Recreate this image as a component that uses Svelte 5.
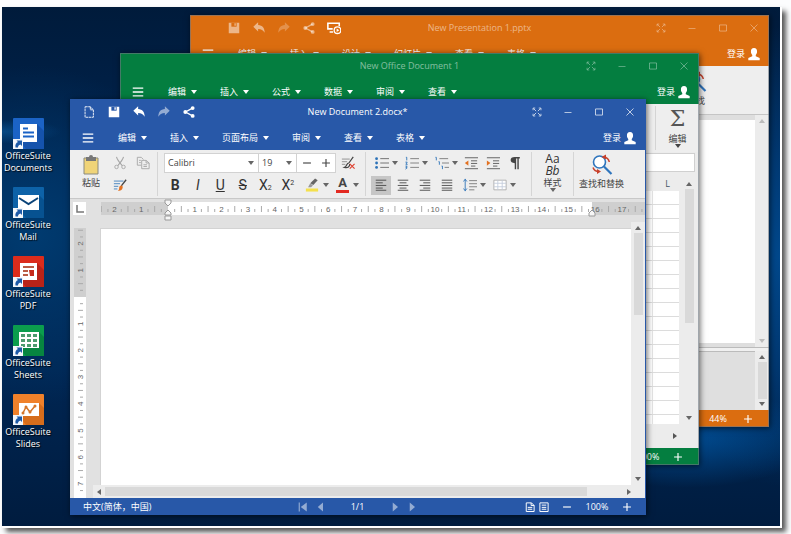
<script>
  const shortcuts = [
    { icon: 'documents', name: 'Documents' },
    { icon: 'mail', name: 'Mail' },
    { icon: 'pdf', name: 'PDF' },
    { icon: 'sheets', name: 'Sheets' },
    { icon: 'slides', name: 'Slides' }
  ];

  const docMenus = ['编辑', '插入', '页面布局', '审阅', '查看', '表格'];
  const sheetMenus = ['编辑', '插入', '公式', '数据', '审阅', '查看'];
  const slideMenus = ['编辑', '插入', '设计', '幻灯片', '查看', '表格'];

  const docTools = ['new', 'save', 'undo', 'redo', 'share'];
  const slideTools = ['', 'save', 'undo', 'redo', 'share', 'play'];

  const CM = 26.7;
  const hZero = 67;
  const vZero = 69;

  function ticks(zero, length) {
    const list = [];
    for (let i = Math.ceil((-zero / CM) * 4); zero + (i * CM) / 4 < length; i++) {
      list.push({ pos: zero + (i * CM) / 4, whole: i % 4 === 0, half: i % 2 === 0, n: Math.abs(i / 4) });
    }
    return list;
  }

  const hTicks = ticks(hZero, 544);
  const vTicks = ticks(vZero, 269);
  const rows = Array.from({ length: 17 }, (_, i) => i);

  let font = $state('Calibri');
  let size = $state('19');
  let align = $state('left');
</script>

{#snippet glyph(name)}
  <svg class="glyph" viewBox="0 0 16 16" width="14" height="14" aria-hidden="true" fill="none" stroke="currentColor">
    {#if name === 'new'}
      <path d="M3.500 2h6l3.500 3.500v8.500h-9.500z M9.500 2v3.500h3.500" stroke-dasharray="3 .6" />
    {:else if name === 'save'}
      <path d="M2 2h12v12H2z" fill="currentColor" stroke="none" />
      <path d="M5 2h6v4.500H5z" class="hole" stroke="none" />
      <path d="M8.500 2.500h1.500v3H8.500z" fill="currentColor" stroke="none" />
    {:else if name === 'undo'}
      <path d="M1.500 6.500 7 1.500v3c5 .3 7.500 3.500 7.500 9-1.500-3-4-4.500-7.500-4.500v3z" fill="currentColor" stroke="none" />
    {:else if name === 'redo'}
      <path d="M14.500 6.500 9 1.500v3c-5 .3-7.500 3.500-7.500 9 1.500-3 4-4.500 7.500-4.500v3z" fill="currentColor" stroke="none" />
    {:else if name === 'share'}
      <path d="M12 3.500 4 8l8 4.500" stroke-width="1.500" />
      <g fill="currentColor" stroke="none"><circle cx="12.200" cy="3.500" r="2.200" /><circle cx="3.800" cy="8" r="2.200" /><circle cx="12.200" cy="12.500" r="2.200" /></g>
    {:else if name === 'play'}
      <path d="M6.500 9H1V2.500h13V6M3 12.500h4" stroke-width="1.800" />
      <circle cx="12" cy="10.500" r="3.800" stroke-width="1.500" />
      <path d="m11 8.500 3 2-3 2z" fill="currentColor" stroke="none" />
    {:else if name === 'full'}
      <path d="M3.500 6V3.500H6M10 3.500h2.500V6M12.500 10v2.500H10M6 12.500H3.500V10M4 4l3 3m2 2 3 3M12 4 9 7m-2 2-3 3" />
    {:else if name === 'min'}
      <path d="M4 8.500h8" />
    {:else if name === 'max'}
      <path d="M4 4.500h8v7H4z" />
    {:else if name === 'close'}
      <path d="m4 4 8 8m0-8-8 8" />
    {:else if name === 'menu'}
      <path d="M2 3.500h12M2 8h12M2 12.500h12" stroke-width="1.500" />
    {:else if name === 'user'}
      <path d="M8 1c2.500 0 3.500 1.700 3.500 4 0 2-.7 3-1.500 4v1.500l4.500 2V15h-13v-2.500l4.500-2V9c-.8-1-1.500-2-1.500-4C4.500 2.700 5.500 1 8 1z" fill="currentColor" stroke="none" />
    {:else if name === 'cut'}
      <path d="M4 1c.5 3 3.500 6.500 6.500 10M12 1c-.5 3-3.500 6.500-6.500 10" stroke-width="1.200" />
      <circle cx="4" cy="12.500" r="2" /><circle cx="12" cy="12.500" r="2" />
    {:else if name === 'copy'}
      <path d="M6 10.500H1.500v-9H6L8.500 4M3.500 5h2M3.500 7.500h2" />
      <path d="M6.500 5h5L15 8v6.500H6.500zM11.500 5v3H15M8.500 10h4M8.500 12h4" />
    {:else if name === 'brush'}
      <path d="M1 3.500h11M1 6.500h7M1 9.500h5M1 12.500h4" stroke="#3d7ebd" />
      <path d="m15 2-5.500 7" stroke="#444" stroke-width="1.500" />
      <path d="M9.500 8.500c2 .5 2 2 1 4s-3 2-5 2c1.500-1 1.500-1.500 1.500-3s1-3 2.500-3z" fill="#e37222" stroke="none" />
    {:else if name === 'clear'}
      <path d="M1 3.500h9M1 6.500h6M1 9.500h4" stroke="#888" />
      <path d="m14 1-5 7c-3 0-2 4-5 5 4 1 6-1 6-4" stroke="#444" stroke-width="1.400" />
      <path d="m10 9 5.500 5.500m0-5.500L10 14.500" stroke="#df3d2c" stroke-width="1.300" />
    {:else if name === 'marker'}
      <path d="M6 6 11.500.5l3 2L9.500 8z" fill="#666" stroke="none" />
      <path d="m6 6 3 2.500-2 2H3.500z" fill="#999" stroke="none" />
      <path d="M1 12h14v3.500H1z" fill="#f4e04d" stroke="none" />
    {:else if name === 'bullets'}
      <path d="M6 3h10M6 8h10M6 13h10" stroke="#666" />
      <g fill="#2c72b8" stroke="none"><circle cx="1.800" cy="3" r="1.600" /><circle cx="1.800" cy="8" r="1.600" /><circle cx="1.800" cy="13" r="1.600" /></g>
    {:else if name === 'numbers'}
      <path d="M6 3h10M6 8h10M6 13h10" stroke="#777" />
      <path d="M1 1.500h1V5M.5 7h2L1 9.500h2M.5 11.500h2L1 13l1.500.5-2 1.500" stroke="#2c72b8" />
    {:else if name === 'levels'}
      <path d="M5 3h10M8 8h8M11 13h5" stroke="#777" />
      <path d="M.5 1.500h1V5M4 6.500h1V10M7.500 11.500h1V15" stroke="#2c72b8" />
    {:else if name === 'outdent'}
      <path d="M1 2h15M8 5.500h7M8 8.500h7M8 11.500h5M1 14.500h15" stroke="#555" />
      <path d="M5 5v6L1 8z" fill="#e37222" stroke="none" />
    {:else if name === 'indent'}
      <path d="M1 2h15M8 5.500h7M8 8.500h7M8 11.500h5M1 14.500h15" stroke="#555" />
      <path d="M1 5v6l4-3z" fill="#e37222" stroke="none" />
    {:else if name === 'pilcrow'}
      <path d="M13.500 2H7.500M8.500 2v13M11.500 2v13" stroke-width="1.600" />
      <path d="M8 1.200v7C4.500 8.200 3 6.800 3 4.700s1.500-3.500 5-3.500z" fill="currentColor" stroke="none" />
    {:else if name === 'left'}
      <path d="M2 2.500h12M2 5.500h8M2 8.500h12M2 11.500h8M2 14h12" />
    {:else if name === 'center'}
      <path d="M2 2.500h12M4 5.500h8M2 8.500h12M4 11.500h8M2 14h12" />
    {:else if name === 'right'}
      <path d="M2 2.500h12M6 5.500h8M2 8.500h12M6 11.500h8M2 14h12" />
    {:else if name === 'justify'}
      <path d="M2 2.500h12M2 5.500h12M2 8.500h12M2 11.500h12M2 14h12" />
    {:else if name === 'spacing'}
      <path d="M7 3h9M7 6.500h9M7 10h9M7 13.500h6" stroke="#777" />
      <path d="M2.500 1v14M.5 4l2-2.500 2 2.500M.5 12l2 2.500 2-2.500" stroke="#2c72b8" />
    {:else if name === 'table'}
      <path d="M1 2.500h14v11H1z" fill="#fff" stroke="#aaa" />
      <path d="M1 6h14M1 10h14M5.500 2.500v11M10.500 2.500v11" stroke="#c3cddb" />
    {:else if name === 'first'}
      <path d="M3 2v12" stroke-width="1.500" /><path d="M13 2v12L5 8z" fill="currentColor" stroke="none" />
    {:else if name === 'prev'}
      <path d="M12 2v12L5 8z" fill="currentColor" stroke="none" />
    {:else if name === 'next'}
      <path d="M5 2v12l7-6z" fill="currentColor" stroke="none" />
    {:else if name === 'page'}
      <path d="M3 2.500h7l3.500 3.500v8H3zM9.500 2.500V6h4M5 8.500h6M5 11h6" stroke-width="1.300" />
    {:else if name === 'reflow'}
      <path d="M2.500 2.500h11v11.500h-11zM5 5.500h6M5 8.500h6M5 11h6" stroke-width="1.300" />
    {:else if name === 'minus'}
      <path d="M3.500 8h9" stroke-width="1.300" />
    {:else if name === 'plus'}
      <path d="M3.500 8h9M8 3.500v9" stroke-width="1.300" />
    {/if}
  </svg>
{/snippet}

{#snippet find()}
  <svg width="22" height="22" viewBox="0 0 22 22" fill="none" aria-hidden="true">
    <circle cx="8.500" cy="8" r="6" fill="#fff" stroke="#2f75bd" stroke-width="1.600" />
    <path d="m13 12.500 7.500 7.500" stroke="#2f75bd" stroke-width="2.200" />
    <path d="M12.500 3c3 .3 5.300 2 5.800 5M8 17.500c-3 0-5-1.200-6-4" stroke="#c8402a" stroke-width="1.500" />
    <path d="M10.500 3 15 .5v5zM10 17.500 6 15v5z" fill="#c8402a" />
  </svg>
{/snippet}

{#snippet caret()}<span class="caret"></span>{/snippet}

{#snippet chrome(title, tools, menus)}
  <header class="chrome">
    <div class="titlebar">
      <div class="tools">
        {#each tools as tool}
          {#if tool}<button aria-label={tool} class:dim={tool === 'redo'} class:lit={tool === 'play'}>{@render glyph(tool)}</button>{:else}<span class="slot"></span>{/if}
        {/each}
      </div>
      <h1>{title}</h1>
      <div class="controls">
        {#each ['full', 'min', 'max', 'close'] as control}
          <button aria-label={control}>{@render glyph(control)}</button>
        {/each}
      </div>
    </div>
    <nav class="menubar">
      <button class="burger" aria-label="menu">{@render glyph('menu')}</button>
      {#each menus as menu}
        <button class="menu">{menu}{@render caret()}</button>
      {/each}
      <a class="login" href="#login"><span>登录</span>{@render glyph('user')}</a>
    </nav>
  </header>
{/snippet}

{#snippet scrollbar(kind)}
  <div class="scroll {kind}">
    <span class="arrow back"></span>
    <span class="track"><span class="thumb"></span></span>
    <span class="arrow forward"></span>
  </div>
{/snippet}

{#snippet split(name)}
  <button class="split" aria-label={name}><span class="face">{@render glyph(name)}</span>{@render caret()}</button>
{/snippet}

<main class="screen">
  <div class="desktop">
    <div class="shortcuts">
      {#each shortcuts as { icon, name }}
        <button class="shortcut">
          <svg width="31" height="31" viewBox="0 0 31 31" aria-hidden="true">
            {#if icon === 'documents'}
              <rect width="31" height="31" rx="1" fill="#1b63c6" />
              <path d="M24 6 31 13v18H13l-6-7z" fill="#1553ad" />
              <path d="M7 6h17v18H7z" fill="#fff" />
              <path d="M10 10.500h5M10 14.500h11M10 18.500h11" stroke="#1b63c6" stroke-width="2" />
            {:else if icon === 'mail'}
              <rect width="31" height="31" rx="1" fill="#0d62a8" />
              <path d="m26 8 5 5v18H13l-8-8z" fill="#075291" />
              <path d="M5 8h21v15H5z" fill="#fff" />
              <path d="m6 11 9.500 6L25 11" fill="none" stroke="#0a4378" stroke-width="2" />
            {:else if icon === 'pdf'}
              <rect width="31" height="31" rx="1" fill="#dc2c1c" />
              <path d="m24 7 7 7v17H13l-6-7z" fill="#b92318" />
              <path d="M7 7h17v17H7z" fill="#fff" />
              <path d="M10 11h11M10 15h5M10 19h5" stroke="#b95c45" stroke-width="2" />
              <path d="M16 14h5v6h-4z" fill="#c52a1b" />
            {:else if icon === 'sheets'}
              <rect width="31" height="31" rx="1" fill="#0b9d4d" />
              <path d="m26 7 5 5v19H13l-7-8z" fill="#078540" />
              <path d="M6 7h20v16H6z" fill="#fff" />
              <path d="M8 9h4v3H8zm6 0h4v3h-4zm6 0h4v3h-4zM8 14h4v3H8zm6 0h4v3h-4zm6 0h4v3h-4zM8 19h4v3H8zm6 0h4v3h-4zm6 0h4v3h-4z" fill="#4c9b6e" />
            {:else}
              <rect width="31" height="31" rx="1" fill="#f0812a" />
              <path d="m26 9 5 5v17H13l-7-9z" fill="#d66d1c" />
              <path d="M6 9h20v13H6z" fill="#fff" />
              <path d="m10 19 3-6 4 5 5-6" fill="none" stroke="#d5762b" stroke-width="1.500" />
              <g fill="#d5762b"><circle cx="10" cy="19" r="1.500" /><circle cx="13" cy="13" r="1.500" /><circle cx="17" cy="18" r="1.500" /><circle cx="22" cy="12" r="1.500" /></g>
            {/if}
            <path d="M0 21h10v10H0z" fill="#f4f7fb" />
            <path d="M2.500 29.500c-.5-3 .5-4.500 2.500-5.500L3.500 22.500H9V28l-1.500-1.500c-2 .5-2.500 1.500-2.500 3z" fill="#1d5aa8" />
          </svg>
          <span>OfficeSuite<br />{name}</span>
        </button>
      {/each}
    </div>

    <section class="window slides">
      {@render chrome('New Presentation 1.pptx', slideTools, slideMenus)}
      <div class="ribbon back-ribbon"><button class="big">{@render find()}<span>查找</span></button></div>
      <div class="stage"><div class="canvas"></div>{@render scrollbar('v faint')}</div>
      <div class="notes"><div></div>{@render scrollbar('v')}</div>
      <footer class="status"><span class="zoom">44%</span><button class="zoom-btn" aria-label="zoom in">{@render glyph('plus')}</button></footer>
    </section>

    <section class="window sheet">
      {@render chrome('New Office Document 1', [], sheetMenus)}
      <div class="ribbon back-ribbon">
        <button class="big sum"><span class="sigma">Σ</span><span>编辑</span>{@render caret()}</button>
      </div>
      <div class="formula"><input aria-label="formula" /></div>
      <div class="grid">
        <div class="cells">
          <div class="col-head">L</div>
          {#each rows as row (row)}<div class="cell"></div>{/each}
        </div>
        {@render scrollbar('v cells-scroll')}
      </div>
      <div class="tabs"><span class="arrow"></span></div>
      <footer class="status"><span class="zoom">100%</span><button class="zoom-btn" aria-label="zoom in">{@render glyph('plus')}</button></footer>
    </section>

    <section class="window doc">
      {@render chrome('New Document 2.docx*', docTools, docMenus)}
      <div class="ribbon">
        <div class="group clip">
          <button class="big">
            <svg width="16" height="20" viewBox="0 0 16 20" aria-hidden="true">
              <path d="M1 3h14v16H1z" fill="#f0d478" stroke="#8a8a80" />
              <path d="M3 2h3a2 2 0 0 1 4 0h3v4H3z" fill="#777" />
            </svg>
            <span>粘贴</span>
          </button>
          <div class="clip-tools">
            <button class="off" aria-label="cut">{@render glyph('cut')}</button>
            <button class="off" aria-label="copy">{@render glyph('copy')}</button>
            <button aria-label="format painter">{@render glyph('brush')}</button>
          </div>
        </div>
        <div class="group fonts">
          <div class="row">
            <label class="pick family"><select bind:value={font} aria-label="font"><option>Calibri</option></select>{@render caret()}</label>
            <label class="pick points"><select bind:value={size} aria-label="size"><option>19</option></select>{@render caret()}</label>
            <div class="steps">
              <button aria-label="smaller">{@render glyph('minus')}</button>
              <button aria-label="larger">{@render glyph('plus')}</button>
            </div>
            <button class="wipe" aria-label="clear formatting">{@render glyph('clear')}</button>
          </div>
          <div class="row">
            <div class="styles">
              <button><b>B</b></button>
              <button><i>I</i></button>
              <button><u>U</u></button>
              <button><s>S</s></button>
              <button><span>X<small>2</small></span></button>
              <button><span>X<small class="up">2</small></span></button>
            </div>
            {@render split('marker')}
            <button class="split"><span class="face ink">A</span>{@render caret()}</button>
          </div>
        </div>
        <div class="group paras">
          <div class="row">
            {@render split('bullets')}
            {@render split('numbers')}
            {@render split('levels')}
            <button class="face" aria-label="outdent">{@render glyph('outdent')}</button>
            <button class="face" aria-label="indent">{@render glyph('indent')}</button>
            <button class="face" aria-label="marks">{@render glyph('pilcrow')}</button>
          </div>
          <div class="row">
            {#each ['left', 'center', 'right', 'justify'] as side}
              <button class="face" class:active={align === side} aria-label={side} onclick={() => (align = side)}>{@render glyph(side)}</button>
            {/each}
            {@render split('spacing')}
            {@render split('table')}
          </div>
        </div>
        <div class="group style-group">
          <button class="big"><span class="sample"><span>Aa</span><i>Bb</i></span><span>样式</span>{@render caret()}</button>
        </div>
        <div class="group search-group">
          <button class="big search">{@render find()}<span>查找和替换</span></button>
        </div>
      </div>

      <div class="ruler-row">
        <button class="tab-stop" aria-label="tab stop"><svg width="8" height="8" aria-hidden="true"><path d="M1 0v7h7" fill="none" stroke="#777" stroke-width="1.500" /></svg></button>
        <svg class="h-ruler" height="24" aria-hidden="true">
          <rect y="3" width="100%" height="13" fill="#cfcfcf" />
          <rect x={hZero} y="3" width="424" height="13" fill="#fff" />
          {#each hTicks as t}
            {#if t.whole && t.n}
              <text x={t.pos} y="13" text-anchor="middle">{t.n}</text>
            {:else if !t.whole}
              <line x1={t.pos} x2={t.pos} y1={t.half ? 7 : 10} y2="13" />
            {/if}
          {/each}
          <g class="stops">
            <path d="M64 1h6v3l-3 3-3-3zM67 11l3 3v2h-6v-2zM64 17h6v4h-6z" />
            <path d="m491 11 3 3v3h-6v-3z" />
          </g>
        </svg>
      </div>
      <div class="doc-body">
        <svg class="v-ruler" width="12" aria-hidden="true">
          <rect width="12" height="100%" fill="#fff" />
          <rect width="12" height={vZero} fill="#cfcfcf" />
          {#each vTicks as t}
            {#if t.whole && t.n}
              <text transform="translate(9 {t.pos}) rotate(-90)" text-anchor="middle">{t.n}</text>
            {:else if !t.whole}
              <line y1={t.pos} y2={t.pos} x1={t.half ? 4 : 6} x2="9" />
            {/if}
          {/each}
        </svg>
        <div class="paper"></div>
        {@render scrollbar('v page-scroll')}
        {@render scrollbar('h')}
      </div>

      <footer class="status">
        <span class="lang">中文(简体，中国)</span>
        <div class="pager">
          <button class="dim" aria-label="first">{@render glyph('first')}</button>
          <button class="dim" aria-label="previous">{@render glyph('prev')}</button>
          <span>1/1</span>
          <button class="dim" aria-label="next">{@render glyph('next')}</button>
          <button class="dim" aria-label="last">{@render glyph('next')}</button>
        </div>
        <div class="view">
          <div class="modes">
            <button aria-label="page view">{@render glyph('page')}</button>
            <button aria-label="reflow view">{@render glyph('reflow')}</button>
          </div>
          <button class="zoom-btn" aria-label="zoom out">{@render glyph('minus')}</button>
          <span class="zoom">100%</span>
          <button class="zoom-btn" aria-label="zoom in">{@render glyph('plus')}</button>
        </div>
      </footer>
    </section>
  </div>
</main>

<style>
  :global(body) {
    background: #fcfdfe;
  }

  .screen,
  .screen * {
    box-sizing: border-box;
  }

  .screen {
    height: 100vh;
    padding: 7px 11px 8px 2px;
    overflow: hidden;
    font-family: 'Open Sans', 'Noto Sans CJK SC', sans-serif;
    font-size: 9px;
    line-height: 12px;
  }

  button,
  select,
  input {
    margin: 0;
    padding: 0;
    border: 0;
    border-radius: 0;
    background: none;
    color: inherit;
    font: inherit;
  }

  button {
    display: flex;
    align-items: center;
    justify-content: center;
  }

  .glyph {
    display: block;
    flex: none;
  }

  .caret {
    flex: none;
    border: 3px solid transparent;
    border-top: 4px solid currentColor;
    border-bottom: 0;
  }

  .desktop {
    position: relative;
    height: 100%;
    background:
      radial-gradient(ellipse 60px 12px at 0 24%, rgba(12, 92, 160, 0.6), transparent),
      radial-gradient(ellipse 130px 50px at 88% 83%, rgba(0, 105, 195, 0.6), transparent),
      radial-gradient(ellipse 120px 230px at 100% 48%, #00488c, transparent),
      radial-gradient(ellipse 160px 170px at 4% 44%, #003b70, transparent),
      linear-gradient(#001b3b, #002552 35%, #002653 70%, #001c3f);
    box-shadow: 1px 1px 0 1px #fff, 5px 5px 5px 1px #555;
  }

  .shortcuts {
    display: flex;
    flex-direction: column;
    gap: 13px;
    width: 52px;
    padding-top: 111px;
  }

  .shortcut {
    flex-direction: column;
    gap: 1px;
    height: 56px;
    color: #fff;
    text-shadow: 1px 1px 1px #000;
  }

  .window {
    position: absolute;
    display: flex;
    flex-direction: column;
    width: 579px;
    height: 412px;
    background: #ececec;
    outline: 1px solid rgba(110, 120, 130, 0.6);
    outline-offset: -1px;
    box-shadow: 1px 1px 6px rgba(0, 0, 0, 0.6);
  }

  .slides {
    --accent: #db6d10;
    left: 188px;
    top: 8px;
  }

  .sheet {
    --accent: #047e40;
    left: 118px;
    top: 46px;
  }

  .doc {
    --accent: #2858a8;
    left: 68px;
    top: 92px;
    width: 576px;
    height: 416px;
    border-right: 1px solid #2858a8;
    outline: none;
  }

  .chrome {
    flex: none;
    background: var(--accent);
    color: #fff;
  }

  .titlebar {
    display: grid;
    grid-template-columns: 1fr auto 1fr;
    align-items: center;
    height: 26px;
  }

  .slides .titlebar,
  .sheet .titlebar {
    color: rgba(255, 255, 255, 0.5);
  }

  .slides .lit {
    color: #fff;
  }

  h1 {
    margin: 0;
    font-size: 9px;
    font-weight: 400;
    line-height: 12px;
  }

  .tools {
    display: flex;
    padding-left: 6px;
  }

  .tools button,
  .slot {
    width: 25px;
    height: 24px;
  }

  .dim {
    opacity: 0.5;
  }

  .glyph .hole {
    fill: var(--accent);
  }

  .controls {
    display: flex;
    justify-content: flex-end;
  }

  .controls button {
    width: 31px;
    height: 24px;
    opacity: 0.8;
  }

  .menubar {
    display: flex;
    align-items: center;
    height: 25px;
    gap: 23px;
    padding: 0 8px 0 11px;
  }

  .menu {
    gap: 5px;
  }

  .login {
    display: flex;
    align-items: center;
    gap: 2px;
    margin-left: auto;
    color: inherit;
    text-decoration: none;
  }

  .ribbon {
    display: flex;
    flex: none;
    height: 48px;
    padding: 2px 0;
    background: #eee;
    color: #444;
  }

  .group {
    padding: 0 6px;
  }

  .group + .group {
    border-left: 1px solid #d5d5d5;
  }

  .group .caret {
    color: #666;
  }

  .row {
    display: flex;
    align-items: center;
    height: 22px;
  }

  .clip {
    display: flex;
    width: 87px;
    padding: 0 3px 0 8px;
  }

  .big {
    flex-direction: column;
    justify-content: flex-start;
    gap: 2px;
    min-width: 26px;
    padding-top: 3px;
    white-space: nowrap;
  }

  .big .caret {
    margin-top: -3px;
  }

  .clip-tools {
    display: grid;
    grid-template-columns: 23px 23px;
    grid-auto-rows: 22px;
    margin-left: 4px;
  }

  .off {
    color: #a5a5a5;
  }

  .fonts {
    width: 208px;
    padding-right: 0;
  }

  .pick,
  .steps {
    display: flex;
    align-items: center;
    height: 20px;
    border: 1px solid #d2d2d2;
    background: #fff;
  }

  .pick {
    padding: 0 4px 0 3px;
  }

  .pick select {
    flex: 1;
    min-width: 0;
    appearance: none;
  }

  .family {
    width: 95px;
  }

  .points {
    width: 38px;
    border-left: 0;
  }

  .steps {
    width: 39px;
    border-left: 0;
  }

  .steps button {
    flex: 1;
  }

  .wipe {
    width: 24px;
  }

  .styles {
    display: grid;
    grid-template-columns: repeat(6, 1fr);
    align-items: center;
    width: 135px;
    font-family: Roboto, sans-serif;
    font-size: 14px;
    color: #333;
  }

  .styles small {
    font-size: 7px;
    line-height: 1px;
  }

  .styles .up {
    vertical-align: 5px;
  }

  .split {
    width: 28px;
  }

  .fonts .split {
    width: 31px;
  }

  .face {
    display: flex;
    align-items: center;
    justify-content: center;
    width: 20px;
    height: 19px;
  }

  .fonts .face {
    width: 22px;
  }

  .fonts .ink {
    width: 13px;
    height: 15px;
    margin: 0 4px;
    padding-bottom: 4px;
    font-family: Roboto, sans-serif;
    font-size: 13px;
    font-weight: 700;
    box-shadow: inset 0 -3px #e32a22;
  }

  .paras {
    width: 166px;
    padding: 0 5px;
  }

  .paras .row {
    gap: 2px;
  }

  .active {
    background: #c6c6c6;
  }

  .style-group {
    display: flex;
    justify-content: center;
    width: 42px;
  }

  .style-group .big {
    gap: 0;
    padding-top: 1px;
  }

  .style-group .caret {
    margin-top: -1px;
  }

  .sample {
    display: flex;
    flex-direction: column;
    align-items: center;
    font-size: 12px;
    line-height: 12px;
    color: #333;
  }

  .search-group {
    padding: 0 5px;
  }

  .search {
    padding-top: 2px;
  }

  .ruler-row {
    display: flex;
    flex: none;
    height: 24px;
    border-top: 1px solid #c8c8c8;
    background: #e1e1e1;
  }

  .tab-stop {
    width: 13px;
    height: 13px;
    margin: 3px 15px 0 3px;
    background: #fff;
  }

  .h-ruler {
    flex: 1;
    min-width: 0;
    overflow: hidden;
  }

  .h-ruler text,
  .v-ruler text {
    font-family: 'Liberation Sans', sans-serif;
    font-size: 8px;
    fill: #666;
  }

  .h-ruler line,
  .v-ruler line {
    stroke: #aaa;
  }

  .stops path {
    fill: #f6f6f6;
    stroke: #999;
  }

  .doc-body {
    display: grid;
    grid-template-columns: 23px 1fr 14px;
    grid-template-rows: 1fr 13px;
    flex: 1;
    min-height: 0;
    background: #e1e1e1;
  }

  .v-ruler {
    grid-row: 1 / 3;
    height: calc(100% - 6px);
    margin: 6px 0 0 4px;
  }

  .paper {
    margin: 7px 0 0 8px;
    background: #fff;
    box-shadow: 0 0 0 1px #d3d3d3;
  }

  .scroll {
    display: flex;
    flex-direction: column;
    align-items: center;
    justify-content: space-between;
    width: 14px;
    padding: 4px 0;
    background: #ececec;
    color: #666;
  }

  .track {
    flex: 1;
    width: 9px;
    margin: 3px 0;
  }

  .thumb {
    display: block;
    height: 100%;
    background: #d9d9d9;
  }

  .arrow {
    border: 3px solid transparent;
  }

  .back {
    border-bottom: 4px solid currentColor;
    border-top: 0;
  }

  .forward {
    border-top: 4px solid currentColor;
    border-bottom: 0;
  }

  .page-scroll .thumb {
    height: 34%;
  }

  .faint {
    color: #bbb;
  }

  .faint .thumb {
    background: none;
  }

  .scroll.h {
    flex-direction: row;
    grid-column: 2 / 4;
    width: auto;
    padding: 0 14px 0 4px;
  }

  .h .track {
    height: 9px;
    margin: 0 4px;
  }

  .h .thumb {
    width: 93%;
  }

  .h .back {
    border: 3px solid transparent;
    border-right: 4px solid currentColor;
    border-left: 0;
  }

  .h .forward {
    border: 3px solid transparent;
    border-left: 4px solid currentColor;
    border-right: 0;
  }

  .status {
    display: flex;
    align-items: center;
    justify-content: flex-end;
    flex: none;
    height: 17px;
    padding-right: 10px;
    background: var(--accent);
    color: #fff;
  }

  .doc .status {
    display: grid;
    grid-template-columns: 1fr auto 1fr;
    padding: 0 7px;
  }

  .lang {
    padding-left: 6px;
  }

  .pager,
  .view,
  .modes {
    display: flex;
    align-items: center;
  }

  .pager button {
    width: 17px;
  }

  .pager .glyph,
  .modes .glyph {
    width: 12px;
    height: 12px;
  }

  .pager span {
    width: 58px;
    text-align: center;
  }

  .view {
    justify-content: flex-end;
  }

  .modes {
    padding-right: 5px;
  }

  .modes button {
    width: 14px;
  }

  .zoom {
    width: 38px;
    text-align: center;
  }

  .zoom-btn {
    width: 22px;
  }

  .back-ribbon {
    justify-content: flex-end;
  }

  .slides .big {
    width: 50px;
    margin-right: 48px;
  }

  .sum {
    width: 44px;
    padding-top: 1px;
    border-left: 1px solid #d5d5d5;
  }

  .sigma {
    font-family: 'DejaVu Serif', serif;
    font-size: 22px;
    line-height: 24px;
    color: #555;
  }

  .stage {
    display: flex;
    flex: 1;
    border-top: 1px solid #c5c5c5;
    background: #dedede;
  }

  .canvas {
    flex: 1;
    margin: 5px 0 4px;
    background: #fff;
  }

  .notes {
    display: flex;
    flex: none;
    justify-content: flex-end;
    height: 63px;
    padding-top: 3px;
    border-top: 1px solid #bbb;
    background: #f0f0f0;
  }

  .notes > div:first-child {
    flex: 1;
    background: #dfdfdf;
    border-top: 1px solid #bbb;
  }

  .formula {
    flex: none;
    padding: 1px 4px 6px;
  }

  .formula input {
    display: block;
    width: 100%;
    height: 19px;
    border: 1px solid #d0d0d0;
    background: #fff;
  }

  .grid {
    display: flex;
    flex: 1;
    min-height: 0;
  }

  .cells {
    flex: 1;
    overflow: hidden;
  }

  .col-head {
    height: 13px;
    padding-right: 9px;
    text-align: right;
    color: #456;
  }

  .cell {
    height: 14px;
    border-bottom: 1px solid #dcdcdc;
    background: linear-gradient(#e4e4e4, #e4e4e4) calc(100% - 26px) 0 / 1px 100% no-repeat #fff;
  }

  .cells-scroll {
    width: 20px;
  }

  .cells-scroll .thumb {
    height: 60%;
  }

  .tabs {
    display: flex;
    flex: none;
    align-items: center;
    justify-content: flex-end;
    height: 24px;
    padding-right: 22px;
    color: #555;
  }

  .tabs .arrow {
    border-left: 4px solid currentColor;
    border-right: 0;
  }
</style>
